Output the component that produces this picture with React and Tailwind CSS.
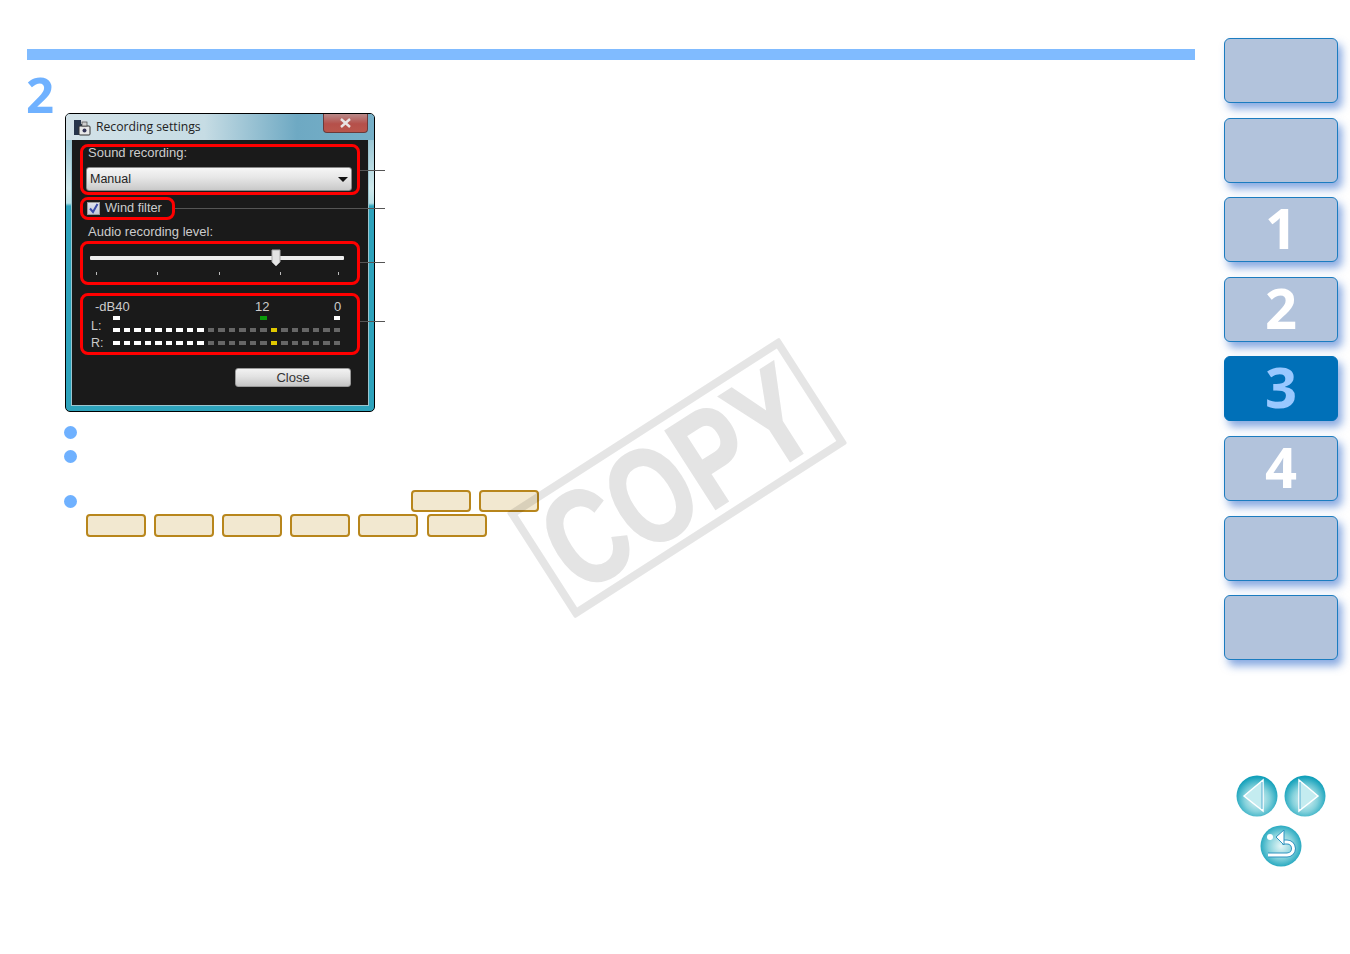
const tabs = ["", "", "1", "2", "3", "4", "", ""];
const ticks = [6, 61, 62, 61, 58];
const top = [0, 14, 21];
const sans = "font-['Liberation_Sans',Arial,sans-serif]";

function Leader({ top, width }) {
  return <div className="absolute left-[calc(100%+3px)] h-px bg-[#555]" style={{ top, width }} />;
}

function Meter({ label, labelClass }) {
  return (
    <div className="flex h-[4px] items-center">
      <span className={`w-[30px] pl-[8px] text-[12.5px] leading-[12px] text-[#ccc] ${labelClass}`}>{label}</span>
      <div className="flex gap-[4px]">
        {Array.from({ length: 22 }, (_, i) => (
          <div
            key={i}
            className={`h-[4px] w-[6.5px] ${i < 9 ? "bg-white" : i === 15 ? "bg-[#e0c800]" : "bg-[#666]"}`}
          />
        ))}
      </div>
    </div>
  );
}

function RecordingWindow() {
  return (
    <div className="ml-[38px] flex h-[299px] w-[310px] flex-col rounded-t-[5px] rounded-b-[5px] border border-black bg-[linear-gradient(to_bottom,#7fb4c8_0%,#cfe9ec_25%,#b7e0e6_30%,#2ea3bc_31%,#2ea3bc_100%)] px-[6px] pb-[6px]">
      <div className="relative -mx-[6px] flex h-[26px] shrink-0 items-center rounded-t-[4px] bg-[linear-gradient(to_right,#d3e2e8,#c6dce4_45%,#6ea9c3_75%,#76afc7)] pl-[8px]">
        <svg width="17" height="17" viewBox="0 0 17 17">
          <rect x="0" y="1" width="12" height="15" fill="#26344a" />
          <rect x="7" y="1" width="5" height="4" fill="#d9dde2" />
          <rect x="5" y="7" width="11" height="9" rx="1" fill="#e8e8e8" stroke="#333" />
          <rect x="8" y="3" width="5" height="4" fill="#cfcfcf" stroke="#444" strokeWidth="0.7" />
          <circle cx="10.5" cy="11.5" r="2" fill="#335" />
        </svg>
        <span className="ml-[5px] font-['Open_Sans',sans-serif] text-[12.2px] text-[#222]">Recording settings</span>
        <div className="absolute right-[6px] top-0 flex h-[19px] w-[45px] items-center justify-center rounded-b-[4px] border border-t-0 border-[#6b3a3a] bg-[linear-gradient(to_bottom,#b98a8a,#b5504a_55%,#b9564c)]">
          <svg width="13" height="10" viewBox="0 0 13 10">
            <path d="M2 1 L11 9 M11 1 L2 9" stroke="#e8e4e4" strokeWidth="2.4" />
          </svg>
        </div>
      </div>

      <div className={`flex flex-1 flex-col bg-[#1a1a1a] px-[8px] pt-[4px] outline outline-[#9cc5cf] ${sans}`}>
        <div className="relative h-[51px] rounded-[8px] border-[3px] border-[#f00] pl-[3px] pr-[5px]">
          <div className="ml-[2px] h-[12px] text-[13px] leading-[12px] text-[#ccc]">Sound recording:</div>
          <div className="mt-[8px] flex h-[24px] items-center justify-between rounded-[3px] border border-[#888] bg-[linear-gradient(to_bottom,#f6f6f6,#e6e6e6_45%,#c9c9c9)] pl-[3px] pr-[3px]">
            <span className="text-[12.5px] text-[#222]">Manual</span>
            <svg width="10" height="5" viewBox="0 0 10 5"><path d="M0 0 H10 L5 5 Z" fill="#111" /></svg>
          </div>
          <Leader top={23} width={25} />
        </div>

        <div className="relative mt-[2px] flex h-[23px] w-[95px] items-center rounded-[8px] border-[3px] border-[#f00] pl-[4px]">
          <div className="flex h-[13px] w-[13px] items-center justify-center border border-[#999] bg-[linear-gradient(to_bottom,#dfe2ee,#c4c8d8)]">
            <svg width="11" height="11" viewBox="0 0 11 11">
              <path d="M2 5.5 L5 9 L9.5 1" fill="none" stroke="#3a4aa8" strokeWidth="2" />
            </svg>
          </div>
          <span className="ml-[5px] -mt-px text-[12.8px] text-[#ccc]">Wind filter</span>
          <Leader top={8} width={210} />
        </div>

        <div className="ml-[8px] mt-[5px] h-[14px] text-[13px] leading-[14px] text-[#ccc]">Audio recording level:</div>

        <div className="relative mt-[2px] h-[44px] rounded-[8px] border-[3px] border-[#f00]">
          <div className="relative ml-[7px] mt-[12px] h-[4px] w-[254px] rounded-[1px] bg-[#eee]">
            <svg className="absolute left-[181px] -top-[7px]" width="10" height="18" viewBox="0 0 10 18">
              <path d="M1 1 H9 V13 L5 17 L1 13 Z" fill="#e4e4e4" stroke="#aaa" />
            </svg>
          </div>
          <div className="ml-[7px] mt-[12px] flex h-[3px]">
            {ticks.map((m, i) => (
              <div key={i} className="h-[3px] w-px bg-[#bbb]" style={{ marginLeft: i === 0 ? m : m - 1 }} />
            ))}
          </div>
          <Leader top={18} width={25} />
        </div>

        <div className="relative mt-[8px] h-[62px] rounded-[8px] border-[3px] border-[#f00] pt-[5px]">
          <div className="flex h-[12px] text-[13px] leading-[12px] text-[#ccc]">
            <span className="ml-[12px] w-[35px]">-dB40</span>
            <span className="ml-[125px] w-[14px]">12</span>
            <span className="ml-[65px]">0</span>
          </div>
          <div className="ml-[30px] mt-[3px] flex gap-[4px]">
            {Array.from({ length: 22 }, (_, i) => (
              <div
                key={i}
                className={`h-[4px] w-[6.5px] ${!top.includes(i) ? "bg-transparent" : i === 14 ? "bg-[#0a9a0a]" : "bg-white"}`}
              />
            ))}
          </div>
          <div className="mt-[8px]"><Meter label="L:" labelClass="-mt-[8px]" /></div>
          <div className="mt-[9px]"><Meter label="R:" labelClass="mt-0" /></div>
          <Leader top={25} width={25} />
        </div>

        <div className="mr-[9px] mt-[13px] flex h-[19px] w-[116px] items-center justify-center self-end rounded-[3px] border border-[#999] bg-[linear-gradient(to_bottom,#f2f2f2,#e2e2e2_45%,#c4c4c4)] text-[13px] text-[#333]">
          Close
        </div>
      </div>
    </div>
  );
}

function Chip() {
  return <div className="h-full w-[60px] rounded-[4px] border-2 border-[#b8861c] bg-[#f2e8d0]" />;
}

function Bullet({ className = "" }) {
  return <div className={`h-[13px] w-[13px] rounded-full bg-[#6fb1ff] ${className}`} />;
}

function Arrow({ id, dir }) {
  return (
    <svg width="42" height="42" viewBox="0 0 42 42">
      <defs>
        <radialGradient id={id} cx="50%" cy="58%" r="55%">
          <stop offset="0%" stopColor="#e6f6f6" />
          <stop offset="55%" stopColor="#86d2dc" />
          <stop offset="100%" stopColor="#12a0ba" />
        </radialGradient>
      </defs>
      <circle cx="21" cy="21" r="20.5" fill={`url(#${id})`} />
      <path
        d={dir === "left" ? "M8 21 L27 5 V36 Z" : "M34 21 L15 5 V36 Z"}
        fill="#c4ecf0"
        stroke="#fff"
        strokeWidth="1.5"
      />
      <path d={dir === "left" ? "M26 7 V34" : "M16 7 V34"} stroke="#3b9fc8" strokeWidth="0.8" />
    </svg>
  );
}

function HomeButton() {
  return (
    <svg width="42" height="42" viewBox="0 0 42 42">
      <defs>
        <radialGradient id="homeFill" cx="50%" cy="50%" r="55%">
          <stop offset="0%" stopColor="#e6f6f6" />
          <stop offset="55%" stopColor="#86d2dc" />
          <stop offset="100%" stopColor="#12a0ba" />
        </radialGradient>
      </defs>
      <circle cx="21" cy="21" r="20.5" fill="url(#homeFill)" />
      <circle cx="10" cy="12" r="3" fill="#fff" />
      <path d="M22 17 H27 A6.5 6.5 0 0 1 27 30 H8" fill="none" stroke="#2f93bf" strokeWidth="5" />
      <path d="M22 17 H27 A6.5 6.5 0 0 1 27 30 H8" fill="none" stroke="#fff" strokeWidth="3" />
      <path d="M16 12 L24 5 V20 Z" fill="#fff" stroke="#2f93bf" strokeWidth="1" />
    </svg>
  );
}

export default function App() {
  return (
    <div className="relative flex h-[954px] w-[1350px] overflow-hidden bg-white">
      <main className="w-[1195px] shrink-0 pl-[27px] pt-[49px]">
        <div className="h-[11px] w-[1168px] bg-[#80bbff]" />
        <div className="h-[53px] font-['Open_Sans',sans-serif] text-[49px] font-bold leading-[50px] text-[#6fb1ff] pt-[9px] -ml-[1px]">2</div>
        <RecordingWindow />

        <div className="ml-[37px]">
          <Bullet className="mt-[14px]" />
          <Bullet className="mt-[11px]" />
          <div className="mt-[27px] flex h-[22px] items-center">
            <Bullet />
            <div className="ml-[334px] flex h-full gap-[8px]">
              <Chip />
              <Chip />
            </div>
          </div>
          <div className="mt-[2px] flex h-[23px] gap-[8px] pl-[22px]">
            <Chip />
            <Chip />
            <Chip />
            <Chip />
            <Chip />
            <div className="ml-px h-full"><Chip /></div>
          </div>
        </div>
      </main>

      <aside className="ml-[29px] flex w-[114px] shrink-0 flex-col pt-[38px]">
        <div className="flex flex-col gap-[14.6px]">
          {tabs.map((t, i) => (
            <div
              key={i}
              className={`flex h-[65px] items-center justify-center rounded-[6px] border-[1.5px] pb-[5px] font-['Open_Sans',sans-serif] text-[56px] font-bold leading-none shadow-[4px_6px_8px_rgba(40,100,200,0.55)] ${
                i === 4 ? "border-[#0070b8] bg-[#0070b8] text-[#99c8ff]" : "border-[#1b7cc0] bg-[#b2c3dc] text-white"
              }`}
            >
              {t}
            </div>
          ))}
        </div>
        <div className="ml-[12px] mt-[115px] flex gap-[6px]">
          <Arrow id="prevFill" dir="left" />
          <Arrow id="nextFill" dir="right" />
        </div>
        <div className="mt-[8px] self-center">
          <HomeButton />
        </div>
      </aside>

      <div className="pointer-events-none absolute left-[514.5px] top-[414.5px] flex h-[126px] w-[324px] -rotate-[32.7deg] items-center justify-center rounded-[2px] border-[8px] border-black/10">
        <span className="scale-x-[0.76] font-['Liberation_Sans',Arial,sans-serif] text-[135px] font-bold leading-none text-[#e4e4e4] [-webkit-text-stroke:2px_#e4e4e4]">COPY</span>
      </div>
    </div>
  );
}
